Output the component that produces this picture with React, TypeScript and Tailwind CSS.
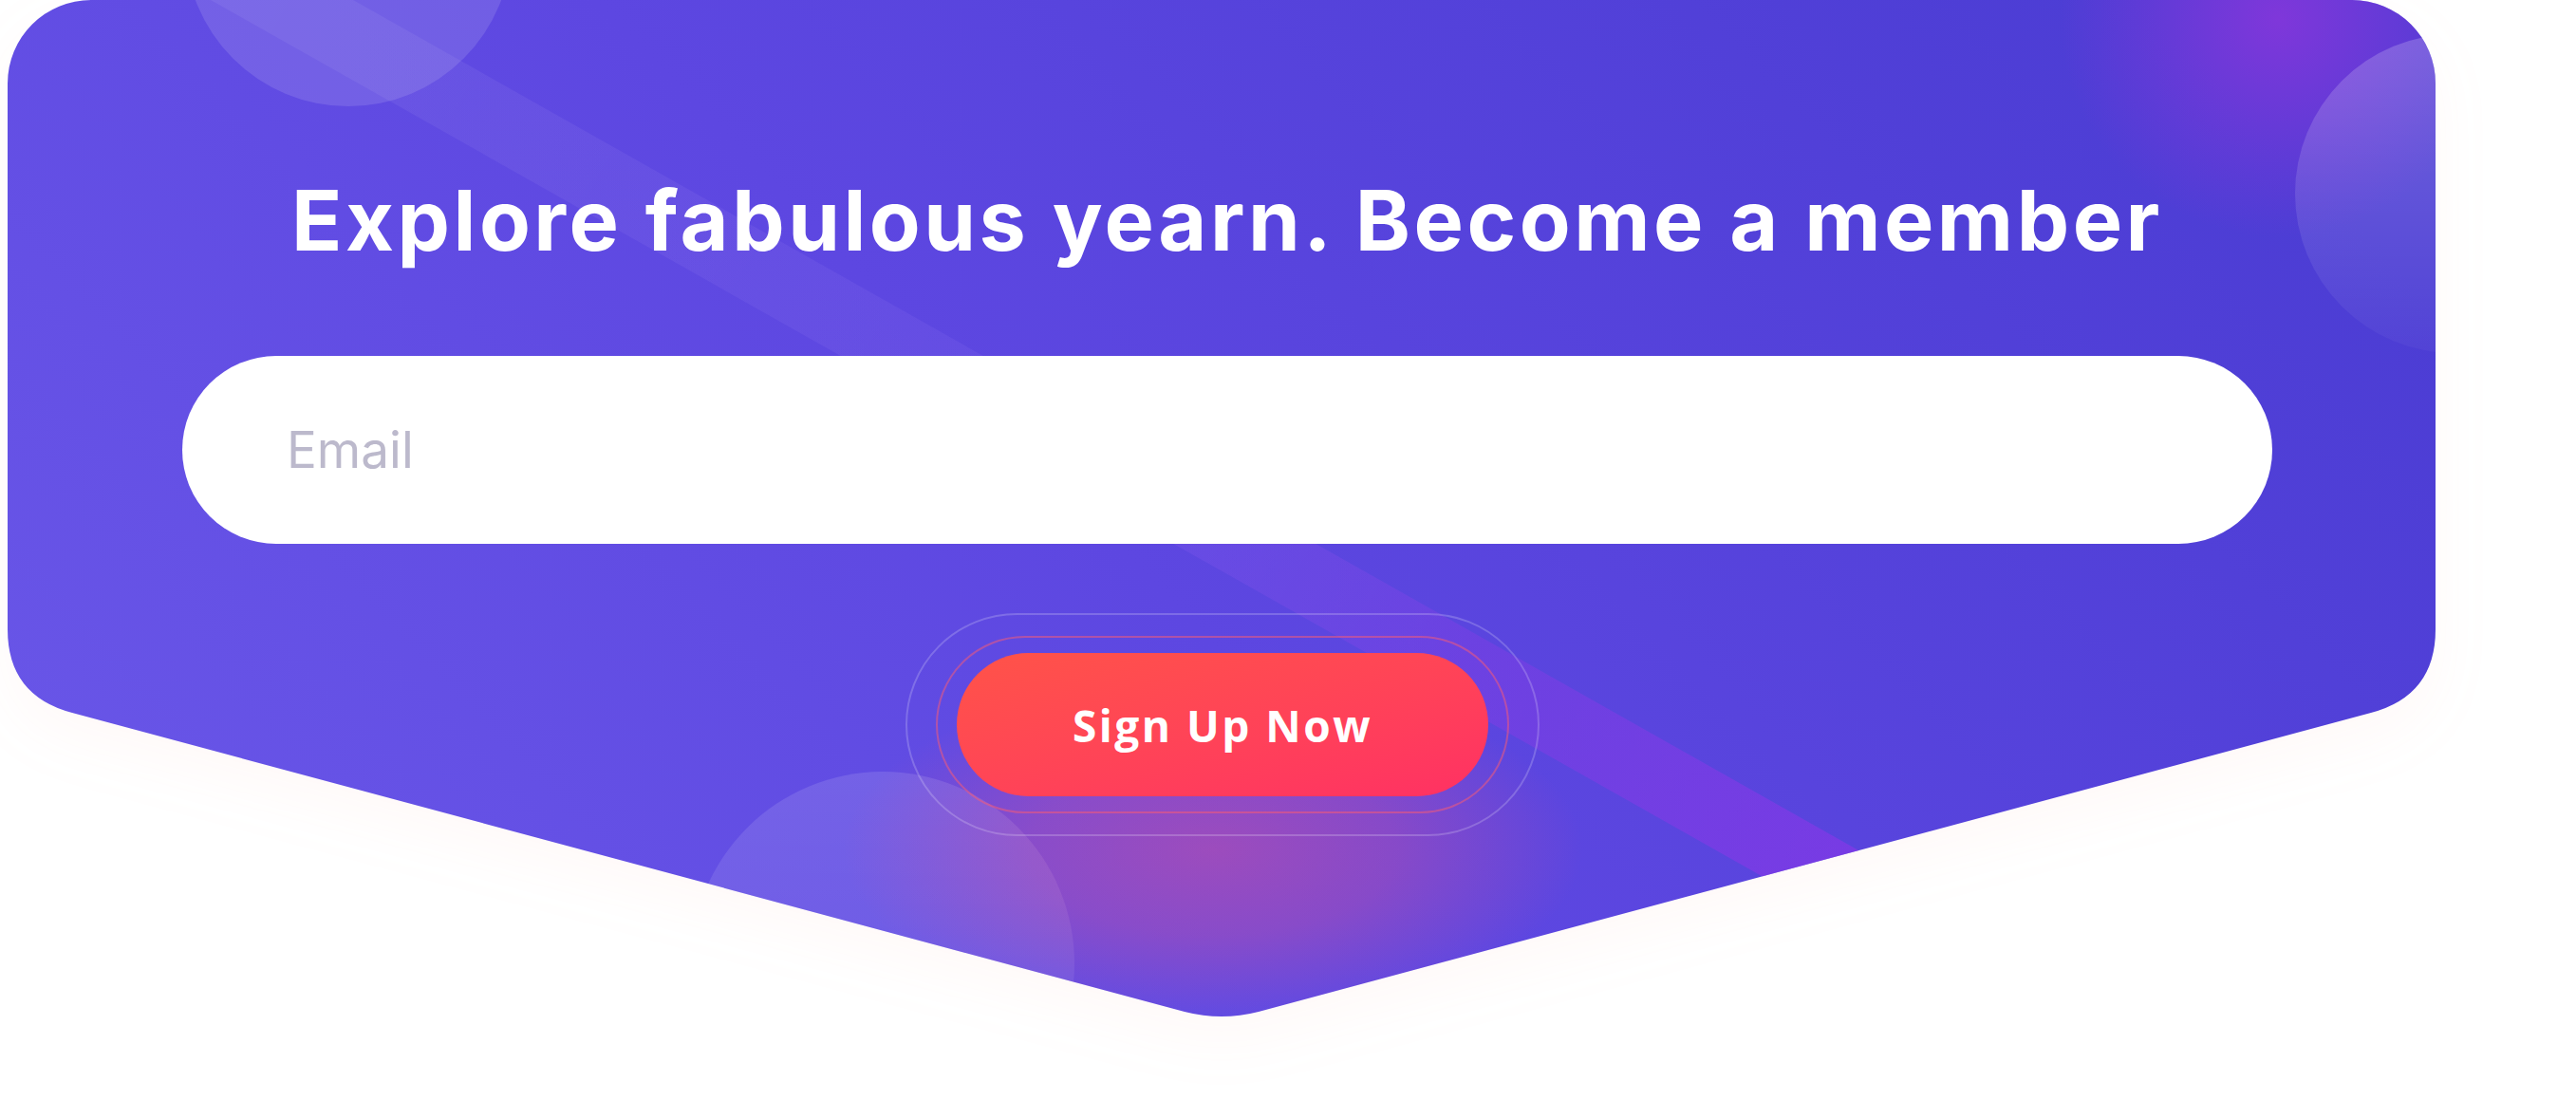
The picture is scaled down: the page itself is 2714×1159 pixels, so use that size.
// Newsletter sign-up banner

const SHAPE =
  'M0,88 A88,88 0 0 1 88,0 L2470,0 A88,88 0 0 1 2558,88 L2558,663 Q2558,733 2490,751 L1318,1066 Q1279,1076 1240,1066 L68,751 Q0,733 0,663 Z'

// diagonal light streak, upper edge from (364,0) to (2028,940)
const BAND = '214,0 364,0 2028,940 1878,940'

function CardBackground() {
  return (
    <svg
      className="absolute left-0 top-0 [filter:drop-shadow(0_24px_30px_rgba(255,140,110,0.05))]"
      width="2558"
      height="1090"
      viewBox="0 0 2558 1090"
    >
      <defs>
        <linearGradient id="cardBg" x1="0" y1="0.7" x2="1" y2="0.3">
          <stop offset="0" stopColor="#6855e7" />
          <stop offset="0.45" stopColor="#5d47e1" />
          <stop offset="1" stopColor="#4c3dd4" />
        </linearGradient>
        <clipPath id="cardClip">
          <path d={SHAPE} />
        </clipPath>
        <linearGradient id="bandPurple" gradientUnits="userSpaceOnUse" x1="289" y1="0" x2="1953" y2="940">
          <stop offset="0" stopColor="#8b5cf6" stopOpacity="0" />
          <stop offset="0.5" stopColor="#8b5cf6" stopOpacity="0.08" />
          <stop offset="0.75" stopColor="#8e3ae6" stopOpacity="0.35" />
          <stop offset="1" stopColor="#9333ea" stopOpacity="0.55" />
        </linearGradient>
        <linearGradient id="bandSheen" gradientUnits="userSpaceOnUse" x1="289" y1="0" x2="1953" y2="940">
          <stop offset="0" stopColor="#ffffff" stopOpacity="0.06" />
          <stop offset="0.3" stopColor="#ffffff" stopOpacity="0.04" />
          <stop offset="0.55" stopColor="#ffffff" stopOpacity="0.025" />
          <stop offset="0.75" stopColor="#ffffff" stopOpacity="0" />
        </linearGradient>
        <linearGradient id="circleTR" x1="0" y1="0" x2="0" y2="1">
          <stop offset="0" stopColor="#ffffff" stopOpacity="0.2" />
          <stop offset="1" stopColor="#ffffff" stopOpacity="0.03" />
        </linearGradient>
        <linearGradient id="circleBL" x1="0" y1="0" x2="0" y2="1">
          <stop offset="0" stopColor="#ffffff" stopOpacity="0.12" />
          <stop offset="1" stopColor="#ffffff" stopOpacity="0.04" />
        </linearGradient>
        <radialGradient id="glowTR">
          <stop offset="0" stopColor="#9035dc" stopOpacity="0.75" />
          <stop offset="1" stopColor="#9035dc" stopOpacity="0" />
        </radialGradient>
        <radialGradient id="btnGlow">
          <stop offset="0" stopColor="#f2508a" stopOpacity="0.42" />
          <stop offset="0.5" stopColor="#f2508a" stopOpacity="0.28" />
          <stop offset="1" stopColor="#f2508a" stopOpacity="0" />
        </radialGradient>
      </defs>

      <path d={SHAPE} fill="url(#cardBg)" />

      <g clipPath="url(#cardClip)">
        <circle cx="359" cy="-60" r="172" fill="#ffffff" fillOpacity="0.12" />
        <polygon points={BAND} fill="url(#bandSheen)" />
        <polygon points={BAND} fill="url(#bandPurple)" />
        <circle cx="2392" cy="20" r="230" fill="url(#glowTR)" />
        <circle cx="2578" cy="204" r="168" fill="url(#circleTR)" />
        <circle cx="922" cy="1015" r="202" fill="url(#circleBL)" />
        <ellipse cx="1270" cy="895" rx="390" ry="180" fill="url(#btnGlow)" />
      </g>
    </svg>
  )
}

export default function App() {
  return (
    <div className="min-h-[1159px] w-full overflow-hidden bg-white font-['Inter',sans-serif]">
      <section className="relative ml-[8px] h-[1090px] w-[2558px]">
        <CardBackground />

        <div className="relative flex flex-col items-center pl-[12px] pt-[188px]">
          <h2 className="text-[88px] font-bold leading-none tracking-[3.5px] text-white">
            Explore fabulous yearn. Become a member
          </h2>

          <input
            type="email"
            placeholder="Email"
            className="mt-[99px] h-[198px] w-[2202px] rounded-full bg-white pl-[110px] pr-[110px] text-[53px] text-[#3b3663] outline-none placeholder:text-[#bcb9cc]"
          />

          {/* button with two rings */}
          <div className="mr-[10px] mt-[73px] rounded-full border-2 border-white/20 px-[30px] py-[22px]">
            <div className="rounded-full border-2 border-[#ff5a6e]/50 px-[20px] py-[16px]">
              <button className="flex h-[151px] w-[560px] items-center justify-center rounded-full bg-gradient-to-br from-[#ff5348] to-[#ff3063] font-['Open_Sans',sans-serif] text-[46px] font-bold leading-none tracking-[2.5px] text-white">
                Sign Up Now
              </button>
            </div>
          </div>
        </div>
      </section>
    </div>
  )
}
